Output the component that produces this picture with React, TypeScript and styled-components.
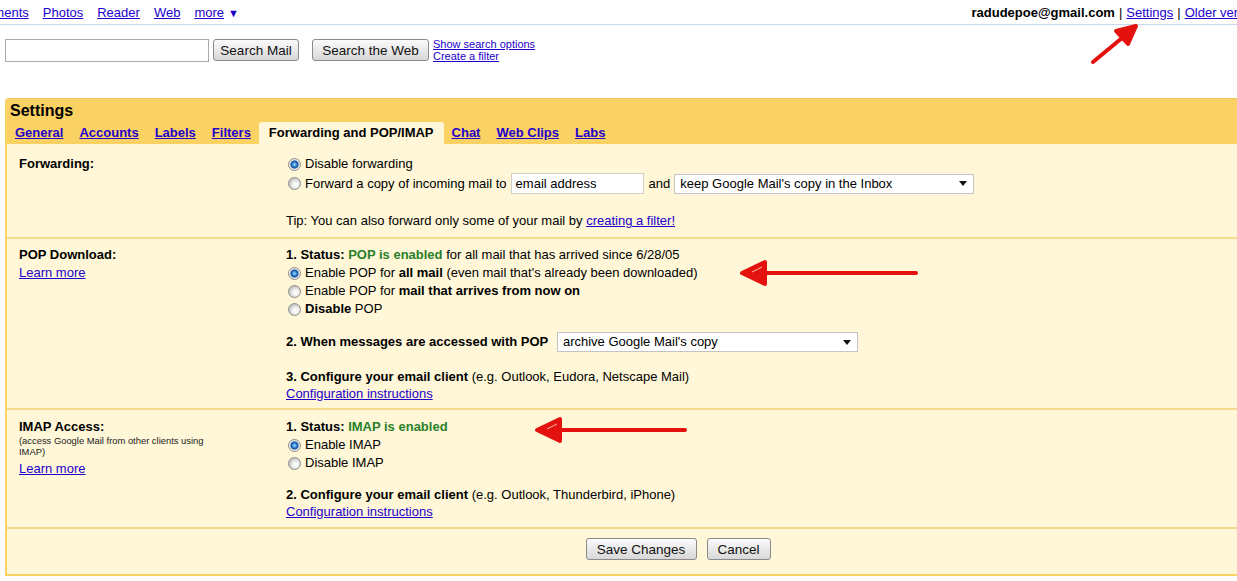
import React from 'react';
import styled, {createGlobalStyle, css} from 'styled-components';

const GlobalStyle = createGlobalStyle`
  html, body {
    margin: 0;
    padding: 0;
    overflow: hidden;
    background: #fff;
  }
  body {
    font-family: "Liberation Sans", Arial, sans-serif;
    font-size: 13px;
    color: #000;
  }
`;

const Page = styled.div`
  position: relative;
  width: 1237px;
  height: 581px;
`;

const Link = styled.a`
  color: #2200cc;
  text-decoration: underline;
  cursor: pointer;
`;

const TopBar = styled.div`
  display: flex;
  justify-content: space-between;
  align-items: center;
  width: 1270px;
  height: 24px;
  border-bottom: 1px solid #c9d7f1;
`;

const NavLinks = styled.div`
  display: flex;
  align-items: center;
  gap: 14px;
  margin-left: -37px;
`;

const Caret = styled.span`
  font-size: 11px;
  color: #2200cc;
  margin-left: 4px;
`;

const UserBox = styled.div`
  display: flex;
  align-items: center;
  gap: 4px;
  padding-right: 8px;
  b {
    font-weight: bold;
  }
`;

const SearchRow = styled.div`
  display: flex;
  align-items: center;
  margin-top: 13px;
  padding-left: 5px;
`;

const SearchInput = styled.input`
  box-sizing: border-box;
  width: 204px;
  height: 23px;
  border: 1px solid #a5acb2;
  margin: 0 4px 0 0;
  padding: 2px 4px;
  background: #fff;
`;

const Button = styled.button<{$w: number}>`
  box-sizing: border-box;
  width: ${(p) => p.$w}px;
  height: 22px;
  padding: 0;
  font-family: "Liberation Sans", Arial, sans-serif;
  font-size: 13.5px;
  color: #111;
  border: 1px solid #8a8a8a;
  border-radius: 3px;
  background: linear-gradient(#fbfbfb, #e9e9e9 50%, #d8d8d8);
`;

const SearchLinks = styled.div`
  display: flex;
  flex-direction: column;
  margin-left: 4px;
  font-size: 11px;
  line-height: 12px;
`;

const Panel = styled.div`
  margin: 36px 0 0 5px;
  width: 1346px;
  background: #fad163;
  border-top: 1px solid #f0c653;
  border-radius: 4px 4px 0 0;
  padding: 0 2px 2px;
  box-sizing: border-box;
`;

const Title = styled.div`
  font-size: 16px;
  font-weight: bold;
  line-height: 18px;
  padding: 3px 0 0 3px;
`;

const Tabs = styled.div`
  display: flex;
  margin-top: 2px;
`;

const Tab = styled.a<{$active?: boolean}>`
  height: 22px;
  line-height: 22px;
  padding: 0 8px;
  font-weight: bold;
  color: #2200cc;
  text-decoration: underline;
  ${(p) =>
    p.$active &&
    css`
      padding: 0 10px;
      color: #000;
      text-decoration: none;
      background: #fff7d7;
      border-radius: 3px 3px 0 0;
    `}
`;

const Content = styled.div`
  background: #fff7d7;
`;

const Section = styled.div<{$top: number; $bottom: number}>`
  display: grid;
  grid-template-columns: 267px 1fr;
  padding: ${(p) => p.$top}px 0 ${(p) => p.$bottom}px 12px;
  border-bottom: 2px solid #f4da8c;
  line-height: 18px;
`;

const Label = styled.div`
  font-weight: bold;
`;

const Small = styled.div`
  font-size: 9.4px;
  line-height: 11px;
  color: #222;
  margin: -1px 0 3px;
`;

const Col = styled.div`
  display: flex;
  flex-direction: column;
  align-items: flex-start;
`;

const Row = styled.div<{$mt?: number; $lh?: number}>`
  display: flex;
  align-items: center;
  margin-top: ${(p) => p.$mt || 0}px;
  ${(p) => p.$lh && `line-height: ${p.$lh}px;`}
`;

const Radio = styled.span<{$on?: boolean}>`
  box-sizing: border-box;
  width: 13px;
  height: 13px;
  margin: 0 4px 0 2px;
  border-radius: 50%;
  border: 1px solid #8d8d8d;
  background: radial-gradient(circle at 60% 60%, #ffffff 0, #f0f0f0 3px, #c8c8c8 6px);
  ${(p) =>
    p.$on &&
    css`
      background: radial-gradient(circle at 50% 50%, #a8dcff 0, #3c8ad8 2px, #10509a 3.5px, #dadada 4.5px, #ffffff 6px);
    `}
`;

const Green = styled.span`
  color: #2a7f2a;
  font-weight: bold;
`;

const TextBox = styled.div`
  box-sizing: border-box;
  width: 133px;
  height: 21px;
  line-height: 19px;
  margin: 0 5px 0 4px;
  padding: 0 4px;
  background: #fff;
  border: 1px solid #d4d0c8;
`;

const SelectBox = styled.div<{$w: number}>`
  box-sizing: border-box;
  display: flex;
  align-items: center;
  justify-content: space-between;
  width: ${(p) => p.$w}px;
  height: 20px;
  padding: 0 6px 0 5px;
  background: #fff;
  border: 1px solid #c4c4c4;
`;

const Footer = styled.div`
  display: flex;
  justify-content: center;
  gap: 10px;
  padding: 9px 0 14px;
`;

const Overlay = styled.svg`
  position: absolute;
  left: 0;
  top: 0;
  pointer-events: none;
`;

const DownArrow = () => (
  <svg width="8" height="5" viewBox="0 0 8 5">
    <path d="M0 0h8L4 5z" fill="#111" />
  </svg>
);

const Arrows = () => (
  <Overlay width="1237" height="581">
    <g stroke="#e4120f" strokeWidth="4" strokeLinecap="round" strokeLinejoin="round" fill="#e4120f">
      <line x1="1093" y1="62" x2="1122" y2="38" />
      <polygon points="1136,26 1128,44 1116,31" />
      <line x1="765" y1="273" x2="916" y2="273" />
      <polygon points="742,273 765,262 765,284" />
      <line x1="560" y1="430" x2="685" y2="430" />
      <polygon points="537,430 560,419 560,441" />
    </g>
    <g stroke="#f7b9a6" strokeWidth="1">
      <line x1="752" y1="272" x2="762" y2="267" />
      <line x1="547" y1="429" x2="557" y2="424" />
    </g>
  </Overlay>
);

const tabs = ['General', 'Accounts', 'Labels', 'Filters', 'Forwarding and POP/IMAP', 'Chat', 'Web Clips', 'Labs'];

export default function App() {
  return (
    <Page>
      <GlobalStyle />
      <TopBar>
        <NavLinks>
          <Link>Documents</Link>
          <Link>Photos</Link>
          <Link>Reader</Link>
          <Link>Web</Link>
          <span>
            <Link>more</Link>
            <Caret>▼</Caret>
          </span>
        </NavLinks>
        <UserBox>
          <b>radudepoe@gmail.com</b> | <Link>Settings</Link> | <Link>Older version</Link>
        </UserBox>
      </TopBar>

      <SearchRow>
        <SearchInput />
        <Button $w={86}>Search Mail</Button>
        <Button $w={117} style={{marginLeft: 13}}>
          Search the Web
        </Button>
        <SearchLinks>
          <Link>Show search options</Link>
          <Link>Create a filter</Link>
        </SearchLinks>
      </SearchRow>

      <Panel>
        <Title>Settings</Title>
        <Tabs>
          {tabs.map((t) => (
            <Tab key={t} $active={t === 'Forwarding and POP/IMAP'}>
              {t}
            </Tab>
          ))}
        </Tabs>
        <Content>
          <Section $top={11} $bottom={7}>
            <Label>Forwarding:</Label>
            <Col>
              <Row>
                <Radio $on />
                Disable forwarding
              </Row>
              <Row>
                <Radio />
                Forward a copy of incoming mail to
                <TextBox>email address</TextBox>
                and
                <SelectBox $w={300} style={{marginLeft: 4}}>
                  keep Google Mail's copy in the Inbox
                  <DownArrow />
                </SelectBox>
              </Row>
              <Row $mt={18}>
                Tip: You can also forward only some of your mail by&nbsp;<Link>creating a filter!</Link>
              </Row>
            </Col>
          </Section>

          <Section $top={7} $bottom={6}>
            <Col>
              <Label>POP Download:</Label>
              <Link>Learn more</Link>
            </Col>
            <Col>
              <Row>
                <b>1. Status:&nbsp;</b>
                <Green>POP is enabled</Green>&nbsp;for all mail that has arrived since 6/28/05
              </Row>
              <Row>
                <Radio $on />
                Enable POP for&nbsp;<b>all mail</b>&nbsp;(even mail that's already been downloaded)
              </Row>
              <Row>
                <Radio />
                Enable POP for&nbsp;<b>mail that arrives from now on</b>
              </Row>
              <Row>
                <Radio />
                <b>Disable</b>&nbsp;POP
              </Row>
              <Row $mt={14}>
                <b>2. When messages are accessed with POP&nbsp;</b>
                <SelectBox $w={301} style={{marginLeft: 5}}>
                  archive Google Mail's copy
                  <DownArrow />
                </SelectBox>
              </Row>
              <Row $mt={16} $lh={17}>
                <b>3. Configure your email client</b>&nbsp;(e.g. Outlook, Eudora, Netscape Mail)
              </Row>
              <Row $lh={17}>
                <Link>Configuration instructions</Link>
              </Row>
            </Col>
          </Section>

          <Section $top={8} $bottom={7}>
            <Col>
              <Label>IMAP Access:</Label>
              <Small>
                (access Google Mail from other clients using
                <br />
                IMAP)
              </Small>
              <Link>Learn more</Link>
            </Col>
            <Col>
              <Row>
                <b>1. Status:&nbsp;</b>
                <Green>IMAP is enabled</Green>
              </Row>
              <Row>
                <Radio $on />
                Enable IMAP
              </Row>
              <Row>
                <Radio />
                Disable IMAP
              </Row>
              <Row $mt={14} $lh={17}>
                <b>2. Configure your email client</b>&nbsp;(e.g. Outlook, Thunderbird, iPhone)
              </Row>
              <Row $lh={17}>
                <Link>Configuration instructions</Link>
              </Row>
            </Col>
          </Section>

          <Footer>
            <Button $w={111}>Save Changes</Button>
            <Button $w={64}>Cancel</Button>
          </Footer>
        </Content>
      </Panel>
      <Arrows />
    </Page>
  );
}
